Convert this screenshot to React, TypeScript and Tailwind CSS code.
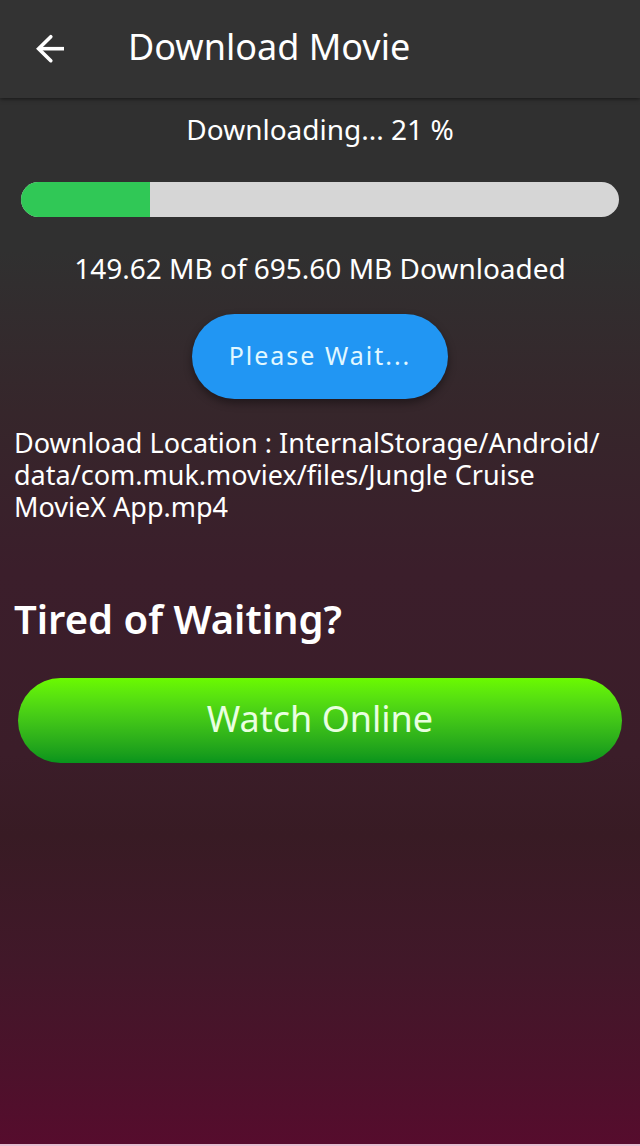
const totalMb = 695.6;
const doneMb = 149.62;
const percent = Math.floor((doneMb / totalMb) * 100);

function BackIcon() {
  return (
    <svg viewBox="0 0 32 32" className="size-8" fill="none" stroke="currentColor" strokeWidth="3.6" aria-hidden="true">
      <path d="M30 15.700H4.500" />
      <path d="M16.800 3.700 4.600 15.700l12.200 12" strokeLinejoin="miter" strokeLinecap="round" />
    </svg>
  );
}

function Header() {
  return (
    <header className="flex h-[98px] items-center bg-[#333333] px-[34px] shadow-[0_1px_4px_rgba(0,0,0,0.55)]">
      <button type="button" aria-label="Back" className="flex size-8 shrink-0 items-center justify-center">
        <BackIcon />
      </button>
      <h1 className="ml-[62px] pb-1 text-[36px] leading-[44px]">Download Movie</h1>
    </header>
  );
}

export default function App() {
  return (
    <div className="flex min-h-screen flex-col border-b-2 border-[#e3bfd0] bg-[linear-gradient(to_bottom,#303030_0%,#303030_22%,#36262b_36%,#3b1e2b_50%,#3b1d29_66%,#381b24_73%,#411829_84%,#4d112b_94%,#560c2d_100%)] font-['Noto_Sans',sans-serif] text-white">
      <Header />
      <main className="flex flex-col">
        <p id="progress-label" className="mt-[15px] text-center text-[28px] leading-8">
          Downloading... {percent} %
        </p>
        <div
          role="progressbar"
          aria-labelledby="progress-label"
          aria-valuemin={0}
          aria-valuemax={100}
          aria-valuenow={percent}
          className="mx-[21px] mt-[37px] h-[35px] overflow-hidden rounded-full bg-[#d6d6d6]"
        >
          <div className="h-full bg-[#30c856]" style={{ width: `${(doneMb / totalMb) * 100}%` }} />
        </div>
        <p className="mt-[35px] text-center text-[28px] leading-8">
          {doneMb.toFixed(2)} MB of {totalMb.toFixed(2)} MB Downloaded
        </p>
        <button
          type="button"
          className="mt-[30px] h-[85px] self-center rounded-full bg-[#2196f3] px-[37px] pb-0.5 text-[25px] tracking-[2px] text-[#e2f8ff] shadow-[0_4px_8px_rgba(0,0,0,0.4)]"
        >
          Please Wait...
        </button>
        <p className="mx-[14px] mt-7 text-[27px] leading-8">
          Download Location : InternalStorage/Android/<wbr />
          data/com.muk.moviex/files/Jungle Cruise MovieX App.mp4
        </p>
        <h2 className="mx-[14px] mt-[70px] text-[40px] font-semibold leading-[52px]">Tired of Waiting?</h2>
        <button
          type="button"
          className="mx-[18px] mt-[33px] h-[85px] rounded-full bg-linear-to-b from-[#6bfa00] to-[#07941c] pb-1 text-[36px] text-[#e9ffe0]"
        >
          Watch Online
        </button>
      </main>
    </div>
  );
}
